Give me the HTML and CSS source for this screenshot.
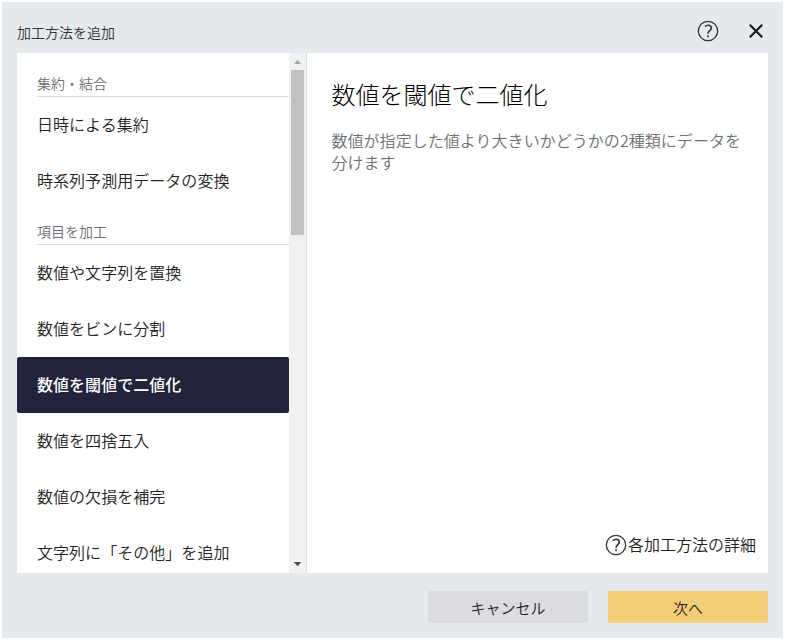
FILE: index.html
```html
<!DOCTYPE html>
<html lang="ja">
<head>
<meta charset="utf-8">
<title>加工方法を追加</title>
<link rel="stylesheet" href="styles.css">
</head>
<body>
<div class="dialog">
  <header class="header">
    <h1 class="title">加工方法を追加</h1>
    <div class="actions">
      <svg class="help" viewBox="0 0 22 22"><circle cx="11" cy="11" r="9.7"/><path class="mark" d="M7.8 6.5Q9.2 5.2 11.2 5.2Q14.3 5.2 14.3 7.9C14.3 10.6 11 10.6 11 13.7"/><path class="mark" d="M11 15.2V17.2"/></svg>
      <svg class="close" viewBox="0 0 16 16"><path d="M1.8 1.8L14.2 14.2M14.2 1.8L1.8 14.2"/></svg>
    </div>
  </header>
  <main class="panel">
    <nav class="list">
      <h2 class="group">集約・結合</h2>
      <div class="item">日時による集約</div>
      <div class="item">時系列予測用データの変換</div>
      <h2 class="group">項目を加工</h2>
      <div class="item">数値や文字列を置換</div>
      <div class="item">数値をビンに分割</div>
      <div class="item selected">数値を閾値で二値化</div>
      <div class="item">数値を四捨五入</div>
      <div class="item">数値の欠損を補完</div>
      <div class="item">文字列に「その他」を追加</div>
    </nav>
    <div class="scrollbar">
      <svg class="arrow up" viewBox="0 0 17 17"><path d="M5 11L8.5 7L12 11Z"/></svg>
      <div class="thumb"></div>
      <svg class="arrow down" viewBox="0 0 17 17"><path d="M4.7 6H12.3L8.5 10.3Z"/></svg>
    </div>
    <section class="detail">
      <h2 class="name">数値を閾値で二値化</h2>
      <p class="description">数値が指定した値より大きいかどうかの2種類にデータを分けます</p>
      <div class="more">
        <svg class="help" viewBox="0 0 22 22"><circle cx="11" cy="11" r="9.7"/><path class="mark" d="M7.8 6.5Q9.2 5.2 11.2 5.2Q14.3 5.2 14.3 7.9C14.3 10.6 11 10.6 11 13.7"/><path class="mark" d="M11 15.2V17.2"/></svg>
        <span class="more-label">各加工方法の詳細</span>
      </div>
    </section>
  </main>
  <footer class="footer">
    <button class="button">キャンセル</button>
    <button class="button primary">次へ</button>
  </footer>
</div>
</body>
</html>
```
FILE: styles.css
```css
* { box-sizing: border-box; }
body {
  margin: 0;
  padding: 2px;
  height: 640px;
  overflow: hidden;
  background: #fff;
  color: #222;
  font-family: "Noto Sans CJK JP", sans-serif;
  font-size: 16px;
  font-weight: 350;
}
h1, h2, p { margin: 0; font-weight: inherit; }
svg { display: block; flex: none; }
.dialog {
  width: 781px;
  height: 636px;
  padding: 0 15px;
  background: #e5e9ee;
}
.header {
  height: 51px;
  display: flex;
  justify-content: space-between;
}
.title { padding-top: 20px; font-size: 14px; line-height: 21px; color: #333; }
.actions { display: flex; gap: 29px; padding: 18px 4px 0 0; }
.help { width: 22px; height: 22px; fill: none; stroke: #333; stroke-width: 1.3; }
.mark { stroke-width: 1.6; }
.close { width: 16px; height: 16px; margin-top: 3px; fill: none; stroke: #1b1b1b; stroke-width: 2.2; }
.panel { display: flex; height: 520px; background: #fff; overflow: hidden; }
.list { width: 272px; padding-top: 8px; }
.group {
  height: 36px;
  margin-left: 20px;
  padding-top: 12px;
  border-bottom: 1px solid #dcdcdf;
  color: #6b6f75;
  font-size: 14px;
  line-height: 21px;
}
.item { height: 56px; padding-left: 20px; line-height: 54px; letter-spacing: 0.04px; }
.selected { border-radius: 2px; background: #21243a; color: #fff; font-weight: 500; }
.scrollbar {
  width: 18px;
  display: flex;
  flex-direction: column;
  background: #f1f1f1;
  border-right: 1px solid #dcdcde;
}
.arrow { width: 17px; height: 17px; }
.up { fill: #a3a3a3; }
.down { margin-top: auto; fill: #505050; }
.thumb { width: 13px; height: 165px; margin-left: 2px; background: #c1c1c1; }
.detail {
  flex: 1;
  display: flex;
  flex-direction: column;
  padding: 23px 12px 16px 24.5px;
}
.name { font-size: 24px; font-weight: 300; line-height: 36px; color: #000; }
.description { width: 418px; margin-top: 17px; line-height: 22px; letter-spacing: 0.04px; color: #6b6f75; }
.more { display: flex; align-items: center; gap: 1px; margin-top: auto; margin-left: auto; line-height: 22px; }
.more-label { margin-bottom: 2px; }
.footer { display: flex; justify-content: flex-end; gap: 20px; padding-top: 18px; }
.button {
  width: 160px;
  height: 32px;
  padding: 1px 0 0;
  border: 0;
  border-radius: 1px;
  background: #dbdce0;
  color: #222;
  font: inherit;
  font-size: 15px;
  line-height: 32px;
}
.primary { background: #f3cd77; }
```
